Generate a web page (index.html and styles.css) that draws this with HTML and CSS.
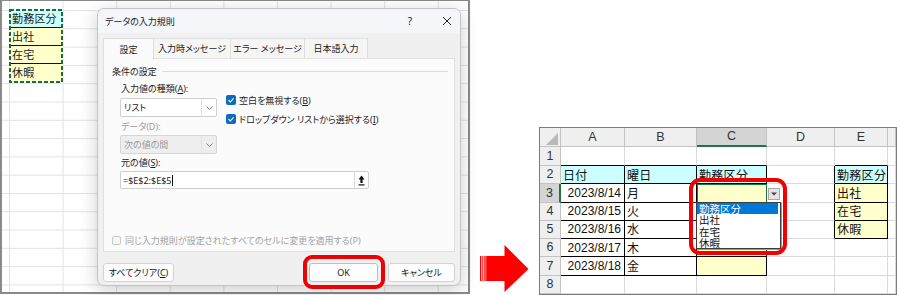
FILE: index.html
```html
<!DOCTYPE html>
<html lang="ja">
<head>
<meta charset="utf-8">
<title>データの入力規則</title>
<link rel="stylesheet" href="styles.css">
</head>
<body>
<div class="page">
  <div class="shot-left">
    <div class="list-cells">
      <div class="lc head">勤務区分</div>
      <div class="lc">出社</div>
      <div class="lc">在宅</div>
      <div class="lc last">休暇</div>
      <svg class="ants" width="54" height="74" viewBox="0 0 54 74"><rect x="1" y="1" width="52" height="72" fill="none" stroke="#1d6b3f" stroke-width="2" stroke-dasharray="4 2"/></svg>
    </div>
    <div class="dialog">
      <div class="titlebar">
        <span class="title">データの入力規則</span>
        <span class="help">?</span>
        <span class="close"><svg width="10" height="10" viewBox="0 0 10 10"><path d="M1 1L9 9M9 1L1 9" stroke="#222" stroke-width="1" fill="none"/></svg></span>
      </div>
      <div class="dlg-body">
        <div class="tabs">
          <div class="tab t1 active">設定</div>
          <div class="tab t2">入力時メッセージ</div>
          <div class="tab t3">エラー メッセージ</div>
          <div class="tab t4">日本語入力</div>
        </div>
        <div class="pane">
          <div class="group-title"><span>条件の設定</span><i class="rule"></i></div>
          <div class="fields-area">
            <div class="fields">
              <div class="col1">
                <div class="lbl first">入力値の種類(<u>A</u>):</div>
                <div class="select"><span class="sv">リスト</span><span class="chev"><svg width="7" height="4" viewBox="0 0 7 4"><path d="M0.5 0.5L3.5 3.5L6.5 0.5" stroke="#666" stroke-width="0.9" fill="none"/></svg></span></div>
                <div class="lbl dim">データ(D):</div>
                <div class="select disabled"><span class="sv">次の値の間</span><span class="chev"><svg width="7" height="4" viewBox="0 0 7 4"><path d="M0.5 0.5L3.5 3.5L6.5 0.5" stroke="#777" stroke-width="0.9" fill="none"/></svg></span></div>
              </div>
              <div class="col2">
                <div class="chk"><span class="box on"><svg width="10" height="10" viewBox="0 0 10 10"><rect width="10" height="10" rx="2" fill="#0f6cbd"/><path d="M2.5 5.2L4.3 7L7.6 3.3" stroke="#fff" stroke-width="1.1" fill="none"/></svg></span>空白を無視する(<u>B</u>)</div>
                <div class="chk"><span class="box on"><svg width="10" height="10" viewBox="0 0 10 10"><rect width="10" height="10" rx="2" fill="#0f6cbd"/><path d="M2.5 5.2L4.3 7L7.6 3.3" stroke="#fff" stroke-width="1.1" fill="none"/></svg></span>ドロップダウン リストから選択する(<u>I</u>)</div>
              </div>
            </div>
            <div class="lbl src">元の値(<u>S</u>):</div>
            <div class="input"><span class="val">=$E$2:$E$5</span><span class="caret"></span><span class="pick"><svg width="7" height="11" viewBox="0 0 7 11"><path d="M3.5 0.5L6.5 4.5H4.6V8H2.4V4.5H0.5Z" fill="#111"/><rect x="0.5" y="9.3" width="6" height="1.2" fill="#111"/></svg></span></div>
          </div>
          <div class="chk apply"><span class="box off"></span>同じ入力規則が設定されたすべてのセルに変更を適用する(P)</div>
        </div>
        <div class="buttons">
          <div class="btn clear">すべてクリア(<u>C</u>)</div>
          <div class="btn ok">OK</div>
          <div class="btn cancel">キャンセル</div>
        </div>
      </div>
    </div>
    <div class="ring ring-ok"></div>
  </div>

  <svg class="arrow" width="51" height="48" viewBox="0 0 51 48">
    <rect x="2" y="11" width="1.3" height="25" fill="#ff0000"/>
    <rect x="4.3" y="11" width="1" height="25" fill="#ff0000"/>
    <rect x="6.3" y="11" width="1.4" height="25" fill="#ff0000"/>
    <rect x="8.2" y="11" width="19" height="25" fill="#ff0000"/>
    <polygon points="26.5,0 50.5,24 26.5,47" fill="#ff0000"/>
  </svg>

  <div class="shot-right">
    <div class="sheet">
      <div class="corner"><svg width="20" height="18" viewBox="0 0 20 18"><polygon points="18,5 18,17 6,17" fill="#b9b9b9"/></svg></div>
      <div class="ch">A</div><div class="ch">B</div><div class="ch csel">C</div><div class="ch">D</div><div class="ch">E</div><div class="ch"></div>

      <div class="rh">1</div><div class="tb"></div><div class="tb"></div><div class="tb"></div><div></div><div class="tb"></div><div></div>

      <div class="rh">2</div><div class="t cy">日付</div><div class="t cy">曜日</div><div class="t cy">勤務区分</div><div class="tr"></div><div class="t cy">勤務区分</div><div></div>

      <div class="rh rsel">3</div><div class="t num">2023/8/14</div><div class="t">月</div><div class="t yl active"></div><div class="tr"></div><div class="t yl">出社</div><div></div>

      <div class="rh">4</div><div class="t num">2023/8/15</div><div class="t">火</div><div class="t yl"></div><div class="tr"></div><div class="t yl">在宅</div><div></div>

      <div class="rh">5</div><div class="t num">2023/8/16</div><div class="t">水</div><div class="t yl"></div><div class="tr"></div><div class="t yl">休暇</div><div></div>

      <div class="rh">6</div><div class="t num">2023/8/17</div><div class="t">木</div><div class="t yl"></div><div></div><div></div><div></div>

      <div class="rh">7</div><div class="t num">2023/8/18</div><div class="t">金</div><div class="t yl"></div><div></div><div></div><div></div>

      <div class="rh">8</div><div></div><div></div><div></div><div></div><div></div><div></div>
    </div>
    <div class="dd-btn"><svg width="6" height="4" viewBox="0 0 6 4"><polygon points="0,0.5 6,0.5 3,3.5" fill="#444"/></svg></div>
    <div class="dd-list">
      <div class="dd-item sel">勤務区分</div>
      <div class="dd-item">出社</div>
      <div class="dd-item">在宅</div>
      <div class="dd-item">休暇</div>
    </div>
    <div class="ring ring-dd"></div>
  </div>
</div>
</body>
</html>
```

FILE: styles.css
```css
* { box-sizing: border-box; margin: 0; padding: 0; }
html, body { width: 900px; height: 295px; overflow: hidden; background: #ffffff; }
body { font-family: "Noto Sans", "Noto Sans CJK JP", sans-serif; color: #1b1b1b; }

.page { display: flex; align-items: flex-end; width: 900px; height: 295px; }

/* ---------- left screenshot ---------- */
.shot-left {
  position: relative;
  flex: none;
  width: 470px;
  height: 294px;
  margin-bottom: 1px;
  border: 2px solid #8a8a8a;
  border-top-width: 1px;
  padding: 8px 0 0 7px;
  background-color: #ffffff;
  background-image:
    linear-gradient(to right, #e2e2e2 1px, transparent 1px),
    linear-gradient(to bottom, #e2e2e2 1px, transparent 1px);
  background-size: 53.6px 18.3px;
  background-position: 7px 9px;
}
.list-cells { position: relative; width: 54px; padding: 1px 0; }
.lc {
  height: 18px;
  padding-left: 3px;
  line-height: 17px;
  white-space: nowrap;
  overflow: hidden;
  font-family: "Noto Sans CJK JP", sans-serif;
  font-size: 11px;
  letter-spacing: 0.2px;
  color: #222;
  background: #ffffcc;
  border-bottom: 1px solid #111;
}
.lc.head { background: #ccffff; }
.lc.last { border-bottom: none; }
.ants { position: absolute; left: 0; top: 0; }

/* dialog */
.dialog {
  position: absolute;
  left: 95px;
  top: 7px;
  width: 364px;
  height: 278px;
  display: flex;
  flex-direction: column;
  background: #f0f0f0;
  border: 1px solid #c4c4c4;
  border-radius: 7px;
  box-shadow: 0 4px 18px rgba(0, 0, 0, 0.2);
  overflow: hidden;
  font-family: "Noto Sans", "Noto Sans CJK JP", sans-serif;
  font-size: 9px;
  color: #1b1b1b;
  font-feature-settings: "palt";
}
.titlebar {
  flex: none;
  height: 24px;
  display: flex;
  align-items: center;
  padding-left: 7px;
  background: #f4f6f9;
}
.title { flex: 1; }
.help { width: 10px; text-align: center; font-size: 10px; margin-right: 27px; }
.close { width: 10px; height: 10px; display: flex; margin-right: 8px; }

.dlg-body { flex: 1; display: flex; flex-direction: column; padding: 5px 5px 0; }
.tabs { display: flex; height: 20px; align-items: flex-start; position: relative; z-index: 1; }
.tab {
  height: 20px;
  display: flex;
  align-items: center;
  justify-content: center;
  background: #f5f5f5;
  border: 1px solid #dedede;
  border-bottom: none;
  margin-right: -1px;
}
.tab.active { height: 21px; background: #fbfbfb; }
.t1 { width: 51px; }
.t2 { width: 78px; }
.t3 { width: 75px; }
.t4 { width: 64px; }

.pane {
  height: 194px;
  display: flex;
  flex-direction: column;
  background: #fbfbfb;
  border: 1px solid #e0e0e0;
  padding: 5px 0 0 8px;
}
.group-title { display: flex; align-items: center; height: 14px; }
.rule { flex: 1; height: 1px; background: #dcdcdc; margin: 0 6px 0 5px; }

.fields-area { margin-left: 8px; }
.fields { display: flex; }
.col1 { width: 97px; flex: none; }
.col2 { margin-left: 9px; padding-top: 12.5px; }
.lbl { height: 14px; line-height: 14px; padding-left: 1px; margin-top: 3px; }
.lbl.first { margin-top: 4px; }
.lbl.dim { color: #9c9c9c; }
.lbl.src { margin-top: 2px; }
.select {
  height: 19px;
  margin-top: 2px;
  display: flex;
  align-items: center;
  background: #ffffff;
  border: 1px solid #cfcfcf;
  border-radius: 2px;
}
.select.disabled { margin-top: 1px; background: #eeeeee; color: #9a9a9a; border-color: #d6d6d6; }
.sv { flex: 1; padding-left: 3px; }
.chev {
  width: 15px;
  height: 100%;
  display: flex;
  align-items: center;
  justify-content: center;
  border-left: 1px solid #e2e2e2;
}

.chk { display: flex; align-items: center; height: 19px; white-space: nowrap; }
.box { width: 10px; height: 10px; display: flex; margin-right: 3px; flex: none; }
.box.off { width: 9px; height: 9px; border: 1px solid #cacaca; border-radius: 2px; background: #f6f6f6; margin-right: 4px; }
.apply { margin-top: auto; margin-bottom: 4px; height: 14px; color: #a3a3a3; }

.input {
  width: 249px;
  height: 18px;
  margin-top: 1px;
  display: flex;
  align-items: center;
  background: #ffffff;
  border: 1px solid #cfcfcf;
  border-radius: 2px;
}
.val { padding-left: 2px; }
.caret { width: 1px; height: 11px; background: #111; margin-left: 1px; }
.pick {
  margin-left: auto;
  width: 14px;
  height: 100%;
  display: flex;
  align-items: center;
  justify-content: center;
  border-left: 1px solid #dcdcdc;
}

.buttons { display: flex; margin-top: 11px; height: 19px; }
.btn {
  height: 19px;
  display: flex;
  align-items: center;
  justify-content: center;
  background: #fdfdfd;
  border: 1px solid #d3d3d3;
  border-radius: 3px;
}
.btn.clear { width: 71px; }
.btn.ok { width: 69px; margin-left: auto; border-color: #a9c2e0; }
.btn.cancel { width: 67px; margin-left: 10px; }

.ring { position: absolute; border: 4px solid #f00000; border-radius: 9px; }
.ring-ok { left: 301px; top: 254px; width: 82px; height: 34px; }

/* ---------- arrow ---------- */
.arrow { flex: none; margin-left: 8px; margin-bottom: 2px; }

/* ---------- right screenshot ---------- */
.shot-right {
  position: relative;
  flex: none;
  width: 358px;
  height: 168px;
  margin-left: 10px;
  border: 1px solid #7c7c7c;
  background: #ffffff;
}
.sheet {
  display: grid;
  grid-template-columns: 21px 64px 72px 70px 68px 53px 8px;
  grid-template-rows: 19px 19px repeat(7, 18.28px);
  font-family: "Noto Sans CJK JP", sans-serif;
  font-size: 12px;
  color: #111;
}
.sheet > div {
  display: flex;
  align-items: center;
  padding: 0 2px;
  white-space: nowrap;
  overflow: hidden;
  line-height: 1;
  border-right: 1px solid #dadada;
  border-bottom: 1px solid #dadada;
}
.sheet > .corner { padding: 0; background: #efefef; border-color: #c3c3c3; }
.sheet > .ch {
  justify-content: center;
  background: #efefef;
  border-color: #c3c3c3;
  font-family: "Liberation Sans", sans-serif;
  font-size: 12.5px;
  color: #333;
}
.sheet > .ch.csel { background: #d4d4d4; border-bottom: 2px solid #217346; }
.sheet > .rh {
  justify-content: center;
  background: #efefef;
  border-color: #c3c3c3;
  font-family: "Liberation Sans", sans-serif;
  font-size: 12.5px;
  color: #333;
}
.sheet > .rh.rsel { background: #d4d4d4; border-right: 2px solid #217346; }
.sheet > .tb { border-bottom-color: #000; }
.sheet > .tr { border-right-color: #000; }
.sheet > .t { border-right-color: #000; border-bottom-color: #000; letter-spacing: 0.3px; }
.sheet > .cy { background: #ccffff; }
.sheet > .yl { background: #ffffcc; }
.sheet > .num {
  justify-content: flex-end;
  padding-right: 3px;
  font-family: "Liberation Sans", sans-serif;
  font-size: 12px;
  letter-spacing: 0;
}
.sheet > .active {
  border-right-color: #217346;
  border-bottom-color: #217346;
  box-shadow: inset 1px 1px 0 #217346;
}

.dd-btn {
  position: absolute;
  left: 228px;
  top: 60px;
  width: 12px;
  height: 12px;
  display: flex;
  align-items: center;
  justify-content: center;
  background: #e4e4e4;
  border: 1px solid #a8a8a8;
}
.dd-list {
  position: absolute;
  left: 156px;
  top: 74px;
  width: 85px;
  height: 47px;
  padding: 0 2px 0 0;
  background: #ffffff;
  border: 1px solid #3c3c3c;
  box-shadow: 1px 1px 0 #9a9a9a;
  font-family: "Noto Sans CJK JP", sans-serif;
  font-size: 10.5px;
  color: #111;
}
.dd-item { height: 11.25px; line-height: 11.25px; padding-left: 2px; white-space: nowrap; }
.dd-item.sel { background: #0078d7; color: #ffffff; }
.ring-dd { left: 149px; top: 50px; width: 98px; height: 77px; border-radius: 11px; }
```
